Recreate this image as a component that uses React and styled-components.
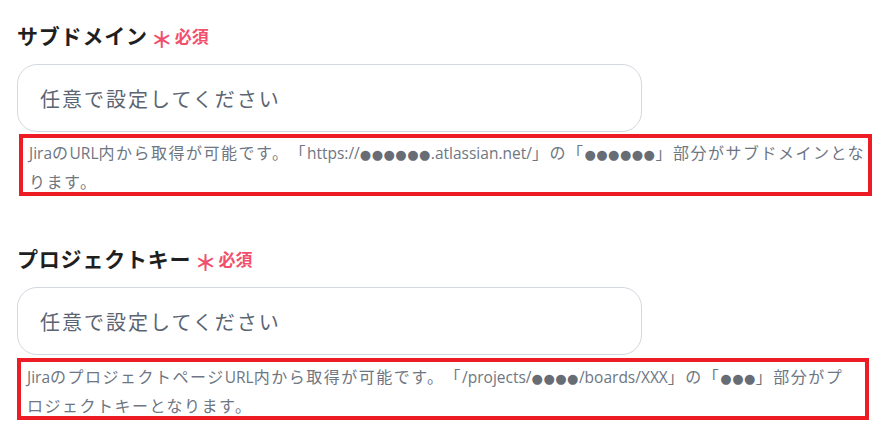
import React from 'react';
import styled, { createGlobalStyle } from 'styled-components';

const GlobalStyle = createGlobalStyle`
    body {
        margin: 0;
        background: #fff;
        font-family: "Noto Sans CJK JP", "Noto Sans", sans-serif;
    }
`

const fields = [
    {
        label: 'サブドメイン',
        note: 'JiraのURL内から取得が可能です。「https://●●●●●●.atlassian.net/」の「●●●●●●」部分がサブドメインとなります。',
        top: 20,
        shift: 2,
        noteGap: 2,
        width: 853,
        padRight: 0,
    },
    {
        label: 'プロジェクトキー',
        note: 'JiraのプロジェクトページURL内から取得が可能です。「/projects/●●●●/boards/XXX」の「●●●」部分がプロジェクトキーとなります。',
        top: 47,
        shift: 0,
        noteGap: 3,
        width: 852,
        padRight: 9,
    },
]

// latin runs and dot runs get their own spacing
const renderNote = text =>
    text.split(/([A-Za-z:/.]+|●+)/).filter(Boolean).map((part, i) => {
        if (part[0] === '●') return <Dots key={i}>{part}</Dots>
        if (/^[A-Za-z:/.]+$/.test(part)) return <Latin key={i}>{part}</Latin>
        return <React.Fragment key={i}>{part}</React.Fragment>
    })

export default function App() {
    return (
        <Wrap>
            <GlobalStyle />
            {fields.map(f => (
                <Field key={f.label} $top={f.top}>
                    <LabelRow>
                        <Label>{f.label}</Label>
                        <Star>＊</Star>
                        <Required>必須</Required>
                    </LabelRow>
                    <Input placeholder="任意で設定してください" readOnly />
                    <Note $shift={f.shift} $gap={f.noteGap} $width={f.width} $padRight={f.padRight}>
                        {renderNote(f.note)}
                    </Note>
                </Field>
            ))}
        </Wrap>
    );
}

const Wrap = styled.div`
    display: flex;
    flex-direction: column;
    padding: 0 0 0 17px;
    width: 880px;
    box-sizing: border-box;
`
const Field = styled.div`
    display: flex;
    flex-direction: column;
    margin-top: ${props => props.$top}px;
`
const LabelRow = styled.div`
    display: flex;
    align-items: center;
    height: 30px;
`
const Label = styled.span`
    font-size: 21px;
    font-weight: 700;
    color: #1f1f1f;
    letter-spacing: 0.8px;
`
const Star = styled.span`
    margin-left: 3px;
    font-size: 22px;
    font-weight: 700;
    color: #f0506e;
    transform: translateY(3px);
`
const Required = styled.span`
    margin-left: 2px;
    font-size: 17px;
    font-weight: 700;
    color: #f0506e;
`
const Input = styled.input`
    margin-top: 14px;
    width: 625px;
    height: 68px;
    box-sizing: border-box;
    padding: 0 22px;
    border: 1px solid #d3d8df;
    border-radius: 20px;
    background: #fff;
    font-family: inherit;
    font-size: 20px;
    letter-spacing: 2px;
    color: #5a6472;
    outline: none;
    &::placeholder {
        color: #5a6472;
    }
`
const Note = styled.div`
    margin-top: ${props => props.$gap}px;
    margin-left: ${props => props.$shift}px;
    width: ${props => props.$width}px;
    height: 62px;
    box-sizing: border-box;
    padding: 1px ${props => props.$padRight}px 0 6px;
    border: 4px solid #ed1c24;
    font-size: 16px;
    line-height: 27px;
    letter-spacing: 1.5px;
    color: #6e7682;
    text-spacing-trim: space-all;
`
const Latin = styled.span`
    font-family: "Open Sans", sans-serif;
    font-size: 15.5px;
    letter-spacing: 0;
`
const Dots = styled.span`
    font-family: "DejaVu Sans", sans-serif;
    font-size: 13px;
    letter-spacing: 0.5px;
    color: #686c75;
`
